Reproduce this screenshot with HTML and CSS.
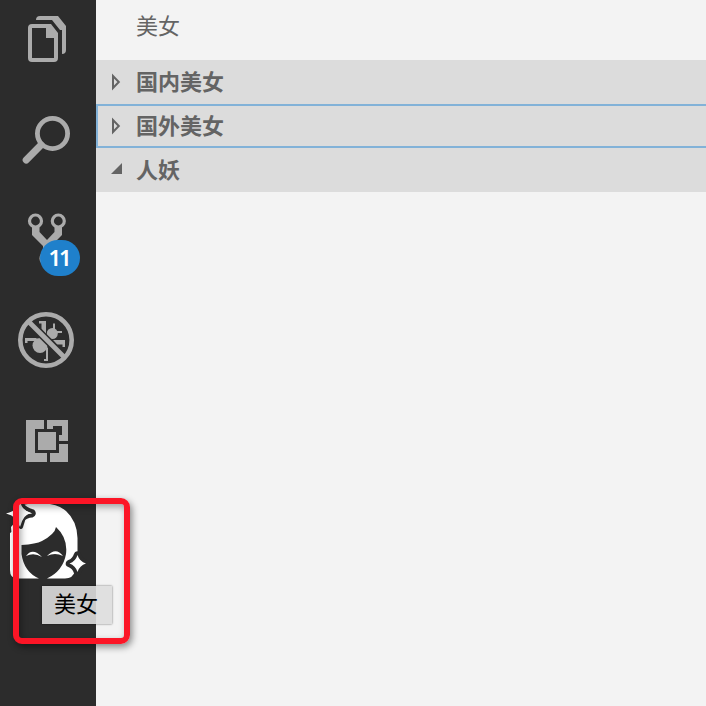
FILE: index.html
```html
<!DOCTYPE html>
<html lang="zh-CN">
<head>
<meta charset="utf-8">
<title>美女</title>
<link rel="stylesheet" href="styles.css">
</head>
<body>
<div class="workbench">
  <nav class="activity-bar">
    <div class="activity first">
      <svg viewBox="0 0 96 90">
        <path class="fill" fill-rule="evenodd" d="M32 24H51L58 33V58Q58 62 54 62H32Q28 62 28 58V28Q28 24 32 24ZM32 28V58H54V38H46V28Z"/>
        <path class="fill" d="M36 20Q36 16 40 16H58L66 26V50Q66 54 62 54V30H60L52 20Z"/>
      </svg>
    </div>
    <div class="activity">
      <svg viewBox="0 90 96 100">
        <circle class="line" cx="52.5" cy="133.5" r="15.1" stroke-width="4.8"/>
        <path class="line" d="M41 145L26.2 160" stroke-width="7" stroke-linecap="round"/>
      </svg>
    </div>
    <div class="activity">
      <svg viewBox="0 190 96 100">
        <circle class="line" cx="35.5" cy="221" r="6" stroke-width="3.2"/>
        <circle class="line" cx="58.3" cy="221" r="6" stroke-width="3.2"/>
        <path class="fill" d="M32 227H39.5V232L47 240L54.5 232V227H62V235L51 246V258H43V246L32 235Z"/>
        <circle class="line" cx="47" cy="258.5" r="6" stroke-width="3.2"/>
      </svg>
      <span class="badge">11</span>
    </div>
    <div class="activity">
      <svg viewBox="0 290 96 100">
        <circle class="fill" cx="52.3" cy="333.5" r="5.5"/>
        <circle class="fill" cx="40" cy="345.5" r="7.5"/>
        <path class="line" stroke-width="2" d="M54 330V323.5M55 332H62"/>
        <path class="fill" d="M39 321H46V334L41.5 329V323.5H39ZM53 340H65V347H62.5V344.5H57ZM25 338H36L40 341H27.5V343H25ZM43 343L48 348V361H44V359H46V348Z"/>
        <path d="M28 321L65 358" stroke="#2c2c2c" stroke-width="8"/>
        <path class="line" d="M28 321L65 358" stroke-width="4.8"/>
        <circle class="line" cx="46" cy="340" r="25.7" stroke-width="4.6"/>
      </svg>
    </div>
    <div class="activity">
      <svg viewBox="0 390 96 100" shape-rendering="crispEdges">
        <path class="fill" d="M26 420H44V429H35V453H47V462H26ZM47 420H68V441H59V435H62V426H53V429H47ZM59 444H68V462H50V453H59ZM38 432H56V450H38Z"/>
      </svg>
    </div>
    <div class="activity">
      <svg viewBox="0 490 96 100">
        <path fill="#fff" d="M10 578.5V529Q10 519 19 511L23 505Q27 503 42 503.5Q57 503 66 511Q77 521 77.5 538V554L75 571Q73 578.5 65 578.5H47Q63 571 66 554Q68 538 56 527Q55 534 42 541Q36 544 21.5 545V554Q24 572 39 578.5H17Q10 578.5 10 570Z"/>
        <path d="M26 556Q32.5 547 42 557Q34 552 26 556ZM47 556Q56 546.5 63 556Q55 552 47 556Z" fill="#fff"/>
        <path d="M22 504Q24 509 33 511.500Q35 514 32 515.500Q26 516 23.500 519L21 527" fill="none" stroke="#2c2c2c" stroke-width="4" stroke-linecap="round" stroke-linejoin="round"/>
        <path d="M8 508H17V520L19 527L10 533Z" fill="#2c2c2c"/>
        <path d="M11 527L18 519L18 527L12 538Z" fill="#fff"/>
        <path d="M6 513.500Q15 511.500 18 506Q20 503 20 500Q21 510 31 513Q23 514.500 20 527Q17 516 6 513.500Z" fill="#fff"/>
        <path d="M77.500 555Q79.500 561.500 86 563.500Q79.500 565.500 77.500 572Q75.500 565.500 69.500 563.500Q75.500 561.500 77.500 555Z" fill="#fff" stroke="#2c2c2c" stroke-width="7.500" stroke-linejoin="round" paint-order="stroke"/>
      </svg>
    </div>
  </nav>
  <main class="sidebar">
    <h1 class="title">美女</h1>
    <div class="row"><svg class="arrow" viewBox="0 0 14 18"><path d="M3 3V15L8.800 9Z" fill="none" stroke="#646464" stroke-width="2"/></svg><span class="label">国内美女</span></div>
    <div class="row focused"><svg class="arrow" viewBox="0 0 14 18"><path d="M3 3V15L8.800 9Z" fill="none" stroke="#646464" stroke-width="2"/></svg><span class="label">国外美女</span></div>
    <div class="row"><svg class="arrow" viewBox="0 0 14 18"><path d="M12 2V13H1Z" fill="#646464"/></svg><span class="label">人妖</span></div>
  </main>
</div>
<div class="marker"></div>
<div class="tooltip">美女</div>
</body>
</html>
```
FILE: styles.css
```css
body {
  margin: 0;
  overflow: hidden;
  font-family: "Noto Sans CJK SC", sans-serif;
  font-size: 22px;
  color: #646464;
}
.workbench {
  display: flex;
  height: 706px;
  background: #f3f3f3;
}
.activity-bar {
  width: 96px;
  flex: none;
  background: #2c2c2c;
}
.activity {
  position: relative;
  height: 100px;
}
.activity.first { height: 90px; }
.activity svg {
  display: block;
  width: 100%;
  height: 100%;
}
.fill { fill: #ababab; }
.line { fill: none; stroke: #ababab; }
.badge {
  position: absolute;
  left: 40px;
  top: 50px;
  width: 40px;
  height: 36px;
  border-radius: 18px;
  background: #1f80cb;
  color: #fff;
  font: 600 22px/34px "Noto Sans", sans-serif;
  letter-spacing: -2px;
  text-indent: -2px;
  text-align: center;
}
.sidebar { flex: 1; }
.title {
  height: 60px;
  margin: 0;
  padding-left: 40px;
  box-sizing: border-box;
  font-size: 22px;
  font-weight: 400;
  line-height: 48px;
}
.row {
  display: flex;
  align-items: center;
  height: 44px;
  padding-left: 14px;
  box-sizing: border-box;
  background: #dcdcdc;
  font-weight: 700;
}
.label {
  height: 44px;
  line-height: 40px;
}
.arrow {
  width: 14px;
  height: 18px;
  margin-right: 12px;
}
.focused { box-shadow: inset 2px 0 #82b2d8, inset 0 2px #82b2d8, inset 0 -2px #82b2d8; }
.marker {
  position: absolute;
  left: 13px;
  top: 498px;
  width: 117px;
  height: 146px;
  box-sizing: border-box;
  border: 6px solid #fc1526;
  border-radius: 9px;
  box-shadow: 2px 3px 7px rgba(0, 0, 0, .45), inset 2px 3px 7px rgba(0, 0, 0, .35);
}
.tooltip {
  position: absolute;
  left: 42px;
  top: 586px;
  width: 70px;
  height: 38px;
  background: linear-gradient(90deg, #cbcbcb 54px, #e0e0e0 54px);
  box-shadow: 0 0 2px rgba(0, 0, 0, .55);
  color: #000;
  line-height: 32px;
  padding-left: 12px;
  box-sizing: border-box;
}
```
